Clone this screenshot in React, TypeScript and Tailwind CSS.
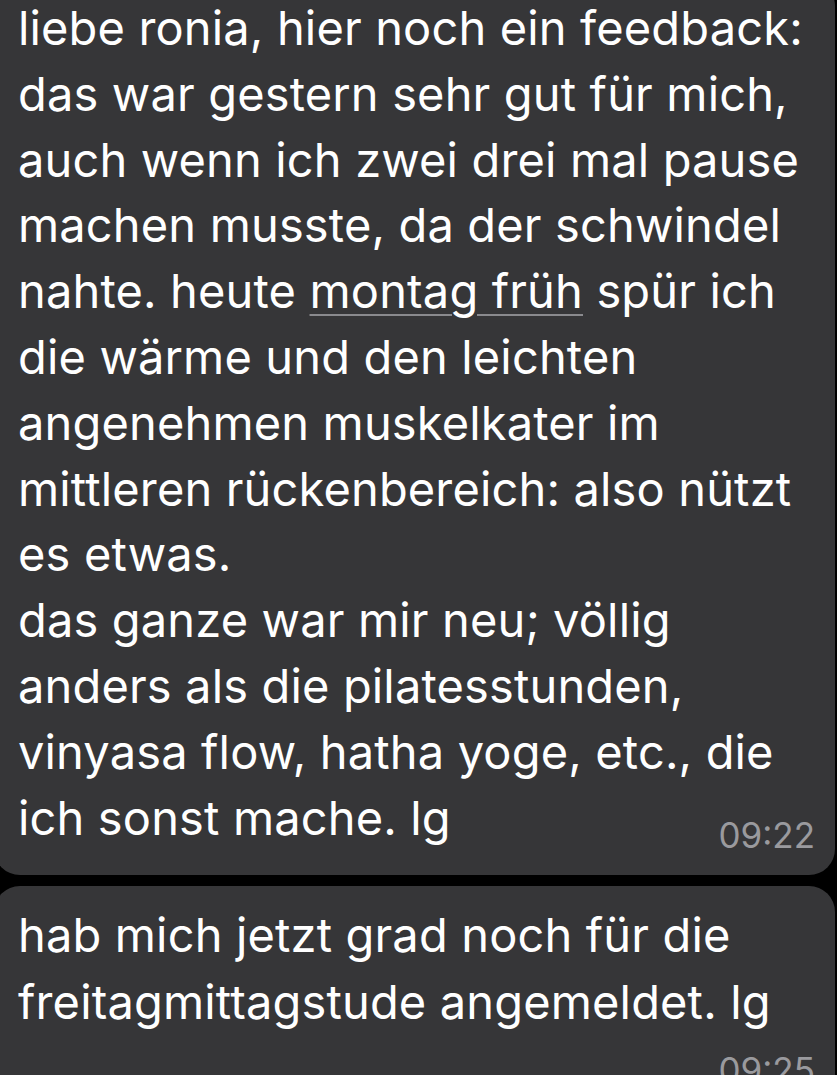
const firstLines = [
  "liebe ronia, hier noch ein feedback:",
  "das war gestern sehr gut für mich,",
  "auch wenn ich zwei drei mal pause",
  "machen musste, da der schwindel",
];

const restLines = [
  "die wärme und den leichten",
  "angenehmen muskelkater im",
  "mittleren rückenbereich: also nützt",
  "es etwas.",
  "das ganze war mir neu; völlig",
  "anders als die pilatesstunden,",
  "vinyasa flow, hatha yoge, etc., die",
];

const Line = ({ children }: { children: React.ReactNode }) => (
  <div className="whitespace-nowrap">{children}</div>
);

const App = () => {
  return (
    <div
      className="h-[1075px] overflow-hidden bg-black text-white"
      style={{ fontFamily: "Inter, 'Noto Sans', sans-serif" }}
    >
      <div className="-mt-[20px] -ml-[6px] mr-[2px] rounded-[26px] bg-[#363638] pl-[24px] pr-[20px] pt-[15px] pb-[25px] text-[47px] leading-[65.8px] tracking-[0.15px]">
        {firstLines.map((l) => (
          <Line key={l}>{l}</Line>
        ))}
        <Line>
          nahte. heute{" "}
          <span className="underline decoration-[#8a8a8e] decoration-2 underline-offset-[6px]">
            montag früh
          </span>{" "}
          spür ich
        </Line>
        {restLines.map((l) => (
          <Line key={l}>{l}</Line>
        ))}
        <div className="flex items-end justify-between">
          <span className="whitespace-nowrap">ich sonst mache. lg</span>
          <span className="text-[35px] leading-[30px] tracking-normal text-[#9a9a9e]">09:22</span>
        </div>
      </div>
      <div className="mt-[11px] -ml-[6px] mr-[2px] rounded-[26px] bg-[#363638] pl-[24px] pr-[20px] pt-[16px] pb-[16px] text-[47px] leading-[66.5px] tracking-[0.15px]">
        <Line>hab mich jetzt grad noch für die</Line>
        <Line>freitagmittagstude angemeldet. lg</Line>
        <div className="mt-[10px] flex justify-end">
          <span className="text-[35px] leading-[50px] tracking-normal text-[#9a9a9e]">09:25</span>
        </div>
      </div>
    </div>
  );
};

export default App;
